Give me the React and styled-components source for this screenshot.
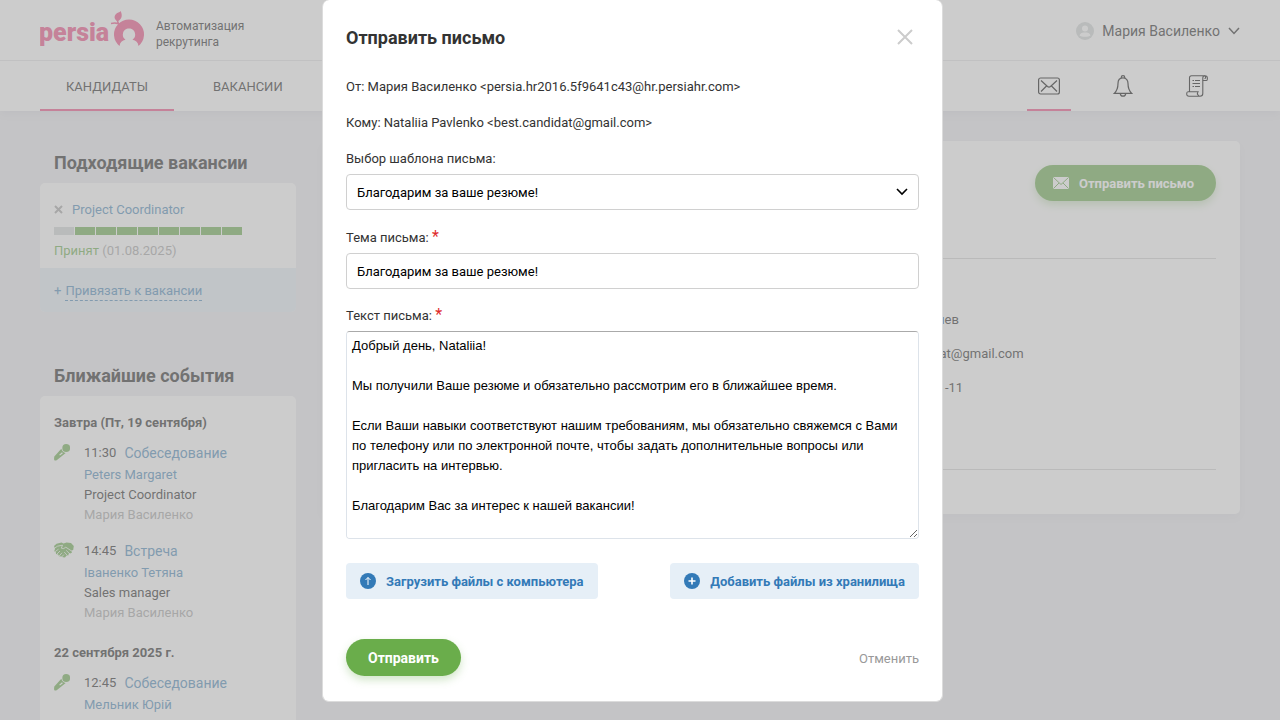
import React, { useState } from 'react';
import styled, { createGlobalStyle } from 'styled-components';

const COLOR = {
  text: '#4a4a4a',
  black: '#333',
  grey: '#b4b4b4',
  link: '#6a9cc4',
  green: '#85bb6c',
  pink: '#f06a98',
  blue: '#337ab7',
};

const FONT = 'Roboto, "Liberation Sans", sans-serif';

const GlobalStyle = createGlobalStyle`
  * {
    box-sizing: border-box;
  }

  body {
    margin: 0;
    background: #eeeef2;
    color: ${COLOR.text};
    font: 13px/20px ${FONT};
  }

  button, input, select {
    font-family: inherit;
  }

  a {
    color: ${COLOR.link};
    text-decoration: none;
  }

  svg {
    display: block;
    flex: none;
  }
`;

const Page = styled.div`
  height: 100vh;
  overflow: hidden;
`;

const Header = styled.header`
  background: #fff;
  box-shadow: 0 2px 10px rgba(0, 0, 60, 0.06);
`;

const TopBar = styled.div`
  display: flex;
  align-items: center;
  justify-content: space-between;
  height: 61px;
  padding: 0 40px;
  border-bottom: 1px solid #e8e8ea;
`;

const Brand = styled.a`
  display: flex;
  align-items: center;
  color: ${COLOR.text};
`;

const Slogan = styled.span`
  width: 100px;
  margin: 8px 0 0 12px;
  font-size: 12px;
  line-height: 16px;
`;

const UserButton = styled.button`
  display: flex;
  align-items: center;
  gap: 8px;
  padding: 2px 0 0;
  border: 0;
  background: none;
  color: ${COLOR.text};
  font-size: 14px;
  line-height: 20px;
`;

const NavBar = styled.nav`
  display: flex;
  justify-content: space-between;
  height: 50px;
  padding: 0 61px 0 40px;
`;

const NavGroup = styled.div`
  display: flex;
  gap: ${props => props.$gap};
`;

const NavLink = styled.a`
  display: flex;
  align-items: center;
  justify-content: center;
  min-width: 44px;
  padding: ${props => (props.$icon ? '2px 0 0' : '4px 26px 0')};
  border-bottom: 2px solid ${props => (props.$active ? COLOR.pink : 'transparent')};
  color: ${COLOR.text};
`;

const Content = styled.div`
  display: flex;
  align-items: flex-start;
  gap: 26px;
  padding: 30px 40px;
`;

const Sidebar = styled.aside`
  display: flex;
  flex: none;
  flex-direction: column;
  gap: 42px;
  width: 256px;
`;

const SideTitle = styled.h2`
  margin: 0;
  padding: 10px 14px 8px;
  font-size: 18px;
  font-weight: 700;
  line-height: 24px;
`;

const Card = styled.div`
  overflow: hidden;
  border-radius: 5px;
  background: #fff;
`;

const CardBody = styled.div`
  padding: 17px 14px 7px;
`;

const VacancyRow = styled.div`
  display: flex;
  align-items: center;
  gap: 9px;
`;

const RemoveButton = styled.button`
  padding: 0 0 2px;
  border: 0;
  background: none;
  color: ${COLOR.grey};
`;

const Stages = styled.div`
  display: flex;
  gap: 1px;
  margin: 7px 0 6px;
`;

const Stage = styled.div`
  width: 20px;
  height: 8px;
  background: ${props => (props.$done ? COLOR.green : '#d8dcdc')};
`;

const Muted = styled.span`
  color: ${COLOR.grey};
`;

const Accepted = styled.span`
  color: ${COLOR.green};
`;

const CardFooter = styled.div`
  display: flex;
  gap: 4px;
  padding: 13px 14px 11px;
  background: #e8f0f6;
  color: ${COLOR.link};
`;

const DashedLink = styled.a`
  height: 20px;
  border-bottom: 1px dashed ${COLOR.link};
`;

const DayTitle = styled.h3`
  margin: 0 0 9px;
  font-size: 13px;
  font-weight: 700;
  line-height: 20px;
`;

const Event = styled.div`
  display: grid;
  grid-template-columns: 30px 1fr;
  margin-bottom: ${props => (props.$last ? '20px' : '15px')};
  color: ${COLOR.green};
`;

const EventInfo = styled.div`
  display: flex;
  flex-direction: column;
  color: ${COLOR.text};
`;

const EventHead = styled.div`
  display: flex;
  gap: 8px;
  padding-bottom: 1px;
  line-height: 22px;

  a {
    font-size: 14px;
  }
`;

const Profile = styled.main`
  flex: 1;
  height: 373px;
  padding: 24px;
  border-radius: 5px;
  background: #fff;
  box-shadow: 0 4px 10px rgba(0, 0, 60, 0.03);
`;

const ProfileActions = styled.div`
  display: flex;
  justify-content: flex-end;
  padding-bottom: 57px;
  border-bottom: 1px solid #dadada;
`;

const PillButton = styled.button`
  display: flex;
  align-items: center;
  gap: 10px;
  height: ${props => (props.$modal ? '37px' : '36px')};
  padding: 0 22px 0 ${props => (props.$modal ? '22px' : '18px')};
  border: 0;
  border-radius: 19px;
  background: ${props => (props.$modal ? '#6aad4b' : COLOR.green)};
  box-shadow: 0 4px 8px rgba(106, 173, 75, 0.3);
  color: #fff;
  font-size: ${props => (props.$modal ? '14px' : '13px')};
  font-weight: 700;
`;

const Contacts = styled.ul`
  display: flex;
  flex-direction: column;
  gap: 14px;
  margin: 0;
  padding: 51px 0 71px 526px;
  border-bottom: 1px solid #dadada;
  list-style: none;
`;

const Overlay = styled.div`
  position: fixed;
  inset: 0;
  display: flex;
  align-items: flex-start;
  justify-content: center;
  padding-right: 15px;
  background: rgba(153, 153, 153, 0.5);
`;

const Modal = styled.form`
  width: 621px;
  padding: 24px 23px 25px;
  border: solid #dcdcdc;
  border-width: 0 1px 1px;
  border-radius: 7px;
  background: #fff;
  color: ${COLOR.black};
`;

const ModalHeader = styled.div`
  display: flex;
  align-items: center;
  justify-content: space-between;
  margin-bottom: 25px;
`;

const ModalTitle = styled.h1`
  margin: 0;
  font-size: 18px;
  font-weight: 700;
  line-height: 28px;
`;

const CloseButton = styled.button`
  padding: 0 6px 2px;
  border: 0;
  background: none;
`;

const Line = styled.p`
  margin: 0 0 16px;
`;

const Field = styled.div`
  position: relative;
  margin-bottom: ${props => props.$space};
`;

const Label = styled.label`
  display: block;
  margin-bottom: 5px;
`;

const Required = styled.span`
  color: #e02b2b;
  font-size: 16px;
  line-height: 16px;
`;

const Input = styled.input`
  display: block;
  width: 100%;
  height: 36px;
  padding: 0 10px;
  border: 1px solid #d0d0d0;
  border-radius: 4px;
  outline: 0;
  background: #fff;
  color: #000;
  font-size: 13px;
  appearance: none;
`;

const SelectArrow = styled.svg`
  position: absolute;
  right: 11px;
  bottom: 14px;
  pointer-events: none;
`;

const TextArea = styled.textarea`
  display: block;
  width: 100%;
  height: 208px;
  padding: 4px 5px;
  border: 1px solid #dde3ea;
  border-top-color: #aaa;
  border-radius: 4px;
  outline: 0;
  color: #000;
  font: 13px/20px "Liberation Sans", sans-serif;
  scrollbar-width: none;
`;

const SplitRow = styled.div`
  display: flex;
  align-items: center;
  justify-content: space-between;
  margin-bottom: ${props => props.$space || 0};
`;

const FileButton = styled.button`
  display: flex;
  align-items: center;
  gap: 10px;
  height: 36px;
  padding: 0 14px;
  border: 0;
  border-radius: 4px;
  background: #e6eff7;
  color: ${COLOR.blue};
  font-size: 13px;
  font-weight: 700;
`;

const CancelButton = styled.button`
  padding: 2px 0 0;
  border: 0;
  background: none;
  color: #999;
  font-size: 13px;
`;

const Logo = () => (
  <svg width="104" height="38" viewBox="0 0 104 38" fill={COLOR.pink}>
    <text x="-1" y="30" fontFamily="Roboto" fontWeight="900" fontSize="25">persia</text>
    <path d="M79.5 35A15 15 0 1 1 98.5 35C98 31.5 96 29.500 92.500 28.800C95 27 95.500 25 95 22.500C94.500 19 92 17.500 89 17.500C86 17.500 83.500 19 83 22.500C82.500 25 83 27 85.500 28.800C82 29.500 80 31.500 79.500 35Z" />
    <path d="M77.500 10.500C74.500 8.500 73.500 5.500 76 3C77.500 1.500 79.500 1.500 80.500 0C82.500 3.500 82.500 8 77.500 10.500Z" />
    <path d="M71 12.500C75 11.500 79 12 82 15M77.500 10L79 14" stroke={COLOR.pink} strokeWidth="1.500" fill="none" />
  </svg>
);

const Avatar = () => (
  <svg width="18" height="18" viewBox="0 0 18 18">
    <circle cx="9" cy="9" r="9" fill="#d8dcdc" />
    <circle cx="9" cy="6.500" r="3" fill="#fff" />
    <path d="M3.500 13.500C4 11 6.500 10.500 9 10.500C11.500 10.500 14 11 14.500 13.500C13 15.200 5 15.200 3.500 13.500Z" fill="#fff" />
  </svg>
);

const Chevron = () => (
  <svg width="12" height="8" viewBox="0 0 12 8" fill="none" stroke={COLOR.text} strokeWidth="1.500">
    <path d="M1 1L6 6.500L11 1" />
  </svg>
);

const MailIcon = () => (
  <svg width="22" height="18" viewBox="0 0 22 18" fill="none" stroke={COLOR.black} strokeWidth="1.200">
    <rect x="0.600" y="1" width="20.800" height="16" rx="2" />
    <path d="M3 3.500L9.500 9.500Q11 10.800 12.500 9.500L19 3.500M3 14.500L8.500 9M19 14.500L13.500 9" />
  </svg>
);

const BellIcon = () => (
  <svg width="20" height="22" viewBox="0 0 20 22" fill="none" stroke={COLOR.black} strokeWidth="1.200">
    <path d="M8.300 3.200V2.300A1.700 1.700 0 0 1 11.700 2.300V3.200" />
    <path d="M10 2.800C6.500 2.800 5 5.500 5 8.500C5 13 4.300 15.500 1.300 18.400H18.700C15.700 15.500 15 13 15 8.500C15 5.500 13.500 2.800 10 2.800Z" />
    <path d="M7.300 18.600C7.500 22 12.500 22 12.700 18.600" />
  </svg>
);

const ScrollIcon = () => (
  <svg width="22" height="22" viewBox="0 0 22 22" fill="none" stroke={COLOR.black} strokeWidth="1.100">
    <path d="M3.500 16.500V3Q3.500 0.800 5.500 0.800H19A2.200 2.200 0 0 0 16.800 3V18.500Q16.800 21.200 14 21.200H3Q0.700 21.200 0.700 18.700Q0.700 16.700 2 16.700H12Q10.800 18.500 12 20Q12.800 21.200 14 21.200" />
    <path d="M16.800 5.500H20.500Q21.400 5.500 21.400 3.500Q21.400 0.800 19 0.800Q20.500 3.500 18.500 3.500" />
    <path d="M6.500 5.500H8M9 5.500H14M6.500 8.500H14M6.500 11.500H8M9 11.500H14" />
  </svg>
);

const MicIcon = () => (
  <svg width="16" height="20" viewBox="0 0 16 20" fill="currentColor">
    <circle cx="12.200" cy="6" r="3.900" />
    <path fillRule="evenodd" d="M7.300 6.800Q8.300 10.300 11.700 11L3 18Q1.200 19 0.400 18.200Q-0.200 17.500 0.300 14.500ZM8 10.300L5.200 12.800L6 13.600L8.900 11.200Z" />
  </svg>
);

const HandshakeIcon = () => (
  <svg width="20" height="20" viewBox="0 0 20 20" fill="currentColor">
    <path d="M0 6L2.500 3.800L7.500 2.600L9.500 3.600L12.500 2.400L17 3L19.800 6L19.200 10L17.600 10.600L18 12.600L16.300 13.600L14.800 13.600L14.300 15.400L12.300 15.800L11 17.600L8.800 17.200L7.200 16.600L5 16.200L4.200 14.600L2 14L1.800 12L0.200 11.200L1 9Z" />
    <path d="M0 8.600L3.500 6.200L8.500 5.200L7.300 8.200Q9.800 9.400 11.800 7.200L18.500 11.600M1.200 11.600L4.500 9.200M2.800 14.200L6 11M5.200 16L8 12.800M7.500 17.200L9.800 14.600M12.200 10.400L16 14M10.200 12L13.600 15.800" fill="none" stroke="#fff" strokeWidth="0.800" />
  </svg>
);

const WhiteMail = () => (
  <svg width="16" height="12" viewBox="0 0 16 12">
    <rect width="16" height="12" rx="1" fill="#fff" />
    <path d="M0.500 0.500L8 7.500L15.500 0.500M0.500 11.500L6 6M15.500 11.500L10 6" fill="none" stroke={COLOR.green} />
  </svg>
);

const CircleIcon = ({ d, width }) => (
  <svg width="16" height="16" viewBox="0 0 16 16">
    <circle cx="8" cy="8" r="8" fill={COLOR.blue} />
    <path d={d} fill="none" stroke="#fff" strokeWidth={width} />
  </svg>
);

const EVENTS = [
  {
    day: 'Завтра (Пт, 19 сентября)',
    items: [
      { time: '11:30', type: 'Собеседование', person: 'Peters Margaret', job: 'Project Coordinator', owner: 'Мария Василенко' },
      { time: '14:45', type: 'Встреча', person: 'Іваненко Тетяна', job: 'Sales manager', owner: 'Мария Василенко' },
    ],
  },
  {
    day: '22 сентября 2025 г.',
    items: [
      { time: '12:45', type: 'Собеседование', person: 'Мельник Юрій' },
    ],
  },
];

const TEMPLATE = 'Благодарим за ваше резюме!';

const MESSAGE = `Добрый день, Nataliia!

Мы получили Ваше резюме и обязательно рассмотрим его в ближайшее время.

Если Ваши навыки соответствуют нашим требованиям, мы обязательно свяжемся с Вами по телефону или по электронной почте, чтобы задать дополнительные вопросы или пригласить на интервью.

Благодарим Вас за интерес к нашей вакансии!

--
Мария Василенко`;

const SendLetter = () => {
  const [subject, setSubject] = useState(TEMPLATE);
  const [message, setMessage] = useState(MESSAGE);

  return (
    <Modal role="dialog" aria-labelledby="letter-title" onSubmit={e => e.preventDefault()}>
      <ModalHeader>
        <ModalTitle id="letter-title">Отправить письмо</ModalTitle>
        <CloseButton type="button" aria-label="Закрыть">
          <svg width="16" height="16" viewBox="0 0 16 16" stroke="#ccc" strokeWidth="2">
            <path d="M1 1L15 15M15 1L1 15" />
          </svg>
        </CloseButton>
      </ModalHeader>
      <Line>От: Мария Василенко &lt;persia.hr2016.5f9641c43@hr.persiahr.com&gt;</Line>
      <Line>Кому: Nataliia Pavlenko &lt;best.candidat@gmail.com&gt;</Line>
      <Field $space="18px">
        <Label htmlFor="template">Выбор шаблона письма:</Label>
        <Input as="select" id="template">
          <option>{TEMPLATE}</option>
        </Input>
        <SelectArrow width="12" height="8" viewBox="0 0 12 8" fill="none" stroke="#000" strokeWidth="1.600">
          <path d="M1 1L6 6L11 1" />
        </SelectArrow>
      </Field>
      <Field $space="17px">
        <Label htmlFor="subject">Тема письма: <Required>*</Required></Label>
        <Input id="subject" value={subject} onChange={e => setSubject(e.target.value)} />
      </Field>
      <Field $space="24px">
        <Label htmlFor="message">Текст письма: <Required>*</Required></Label>
        <TextArea id="message" value={message} onChange={e => setMessage(e.target.value)} />
      </Field>
      <SplitRow $space="40px">
        <FileButton type="button">
          <CircleIcon d="M8 12V4.500M5.500 7L8 4.500L10.500 7" width="1" />
          Загрузить файлы с компьютера
        </FileButton>
        <FileButton type="button">
          <CircleIcon d="M8 4.500V11.500M4.500 8H11.500" width="1.600" />
          Добавить файлы из хранилища
        </FileButton>
      </SplitRow>
      <SplitRow>
        <PillButton $modal type="submit">Отправить</PillButton>
        <CancelButton type="button">Отменить</CancelButton>
      </SplitRow>
    </Modal>
  );
};

const App = () => (
  <>
    <GlobalStyle />
    <Page>
      <Header>
        <TopBar>
          <Brand href="#" aria-label="persia">
            <Logo />
            <Slogan>Автоматизация рекрутинга</Slogan>
          </Brand>
          <UserButton>
            <Avatar />
            Мария Василенко
            <Chevron />
          </UserButton>
        </TopBar>
        <NavBar>
          <NavGroup $gap="13px">
            <NavLink href="#" $active>КАНДИДАТЫ</NavLink>
            <NavLink href="#">ВАКАНСИИ</NavLink>
          </NavGroup>
          <NavGroup $gap="30px">
            <NavLink href="#" $icon $active aria-label="Письма"><MailIcon /></NavLink>
            <NavLink href="#" $icon aria-label="Уведомления"><BellIcon /></NavLink>
            <NavLink href="#" $icon aria-label="Журнал"><ScrollIcon /></NavLink>
          </NavGroup>
        </NavBar>
      </Header>
      <Content>
        <Sidebar>
          <section>
            <SideTitle>Подходящие вакансии</SideTitle>
            <Card>
              <CardBody>
                <VacancyRow>
                  <RemoveButton aria-label="Удалить">
                    <svg width="9" height="9" viewBox="0 0 9 9" stroke="currentColor" strokeWidth="2">
                      <path d="M1 1L8 8M8 1L1 8" />
                    </svg>
                  </RemoveButton>
                  <a href="#">Project Coordinator</a>
                </VacancyRow>
                <Stages>
                  {[0, 1, 2, 3, 4, 5, 6, 7, 8].map(n => <Stage key={n} $done={n > 0} />)}
                </Stages>
                <Accepted>Принят</Accepted> <Muted>(01.08.2025)</Muted>
              </CardBody>
              <CardFooter>
                + <DashedLink href="#">Привязать к вакансии</DashedLink>
              </CardFooter>
            </Card>
          </section>
          <section>
            <SideTitle>Ближайшие события</SideTitle>
            <Card>
              <CardBody>
                {EVENTS.map(({ day, items }) => (
                  <div key={day}>
                    <DayTitle>{day}</DayTitle>
                    {items.map((item, index) => (
                      <Event key={item.time} $last={index === items.length - 1}>
                        {item.type === 'Встреча' ? <HandshakeIcon /> : <MicIcon />}
                        <EventInfo>
                          <EventHead>
                            {item.time}
                            <a href="#">{item.type}</a>
                          </EventHead>
                          <a href="#">{item.person}</a>
                          {item.job && <span>{item.job}</span>}
                          {item.owner && <Muted>{item.owner}</Muted>}
                        </EventInfo>
                      </Event>
                    ))}
                  </div>
                ))}
              </CardBody>
            </Card>
          </section>
        </Sidebar>
        <Profile>
          <ProfileActions>
            <PillButton>
              <WhiteMail />
              Отправить письмо
            </PillButton>
          </ProfileActions>
          <Contacts>
            <li>Украина, Киев</li>
            <li>best.candidat@gmail.com</li>
            <li>8099-111-11-11</li>
          </Contacts>
        </Profile>
      </Content>
    </Page>
    <Overlay>
      <SendLetter />
    </Overlay>
  </>
);

export default App;
